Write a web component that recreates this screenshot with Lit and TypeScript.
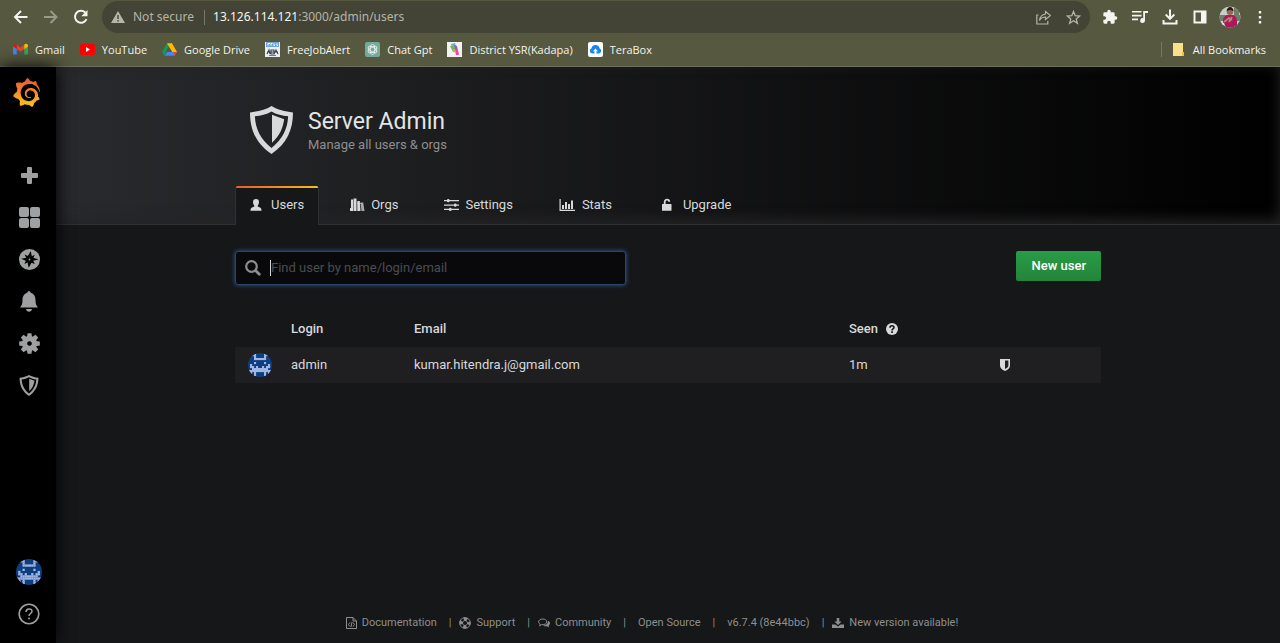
import { LitElement, html, css, svg } from "lit";
import { customElement, state } from "lit/decorators.js";

const GRAFANA =
  "M23.02 10.59a8.578 8.578 0 0 0-.862-3.034 8.911 8.911 0 0 0-1.789-2.445c.337-1.342-.413-2.505-.413-2.505-1.292-.08-2.113.4-2.416.62-.052-.02-.102-.044-.154-.064-.22-.089-.446-.172-.677-.247-.231-.073-.47-.14-.711-.197a9.867 9.867 0 0 0-.875-.161C14.557.753 12.94 0 12.94 0c-1.804 1.145-2.147 2.744-2.147 2.744l-.018.093c-.098.029-.2.057-.298.088-.138.042-.275.094-.413.143-.138.055-.275.107-.41.166a8.869 8.869 0 0 0-1.557.87l-.063-.029c-2.497-.955-4.716.195-4.716.195-.203 2.658.996 4.33 1.235 4.636a11.608 11.608 0 0 0-.607 2.635C1.636 12.684 1 14.9 1 14.9c1.926 2.214 4.171 2.351 4.171 2.351.003-.002.006-.002.006-.005.285.509.615.994.986 1.446.156.19.32.371.488.548-.704 2.009.099 3.68.099 3.68 2.144.08 3.553-.937 3.849-1.173a9.784 9.784 0 0 0 3.164.501h.08l.055-.003.107-.002.103-.005.003.002c1.01 1.44 2.788 1.646 2.788 1.646 1.264-1.332 1.337-2.653 1.337-2.94v-.058c0-.02-.003-.039-.003-.06.265-.187.52-.387.758-.6a7.875 7.875 0 0 0 1.415-1.7c1.43.083 2.437-.885 2.437-.885-.236-1.49-1.085-2.216-1.264-2.354l-.018-.013-.016-.013a.217.217 0 0 1-.031-.02c.008-.092.016-.18.02-.27.011-.162.016-.323.016-.48v-.253l-.005-.098-.008-.135a1.891 1.891 0 0 0-.01-.13c-.003-.042-.008-.083-.013-.125l-.016-.124-.018-.122a6.215 6.215 0 0 0-2.032-3.73 6.015 6.015 0 0 0-3.222-1.46 6.292 6.292 0 0 0-.85-.048l-.107.002h-.063l-.044.003-.104.008a4.777 4.777 0 0 0-3.335 1.695c-.332.4-.592.84-.768 1.297a4.594 4.594 0 0 0-.312 1.817l.003.091c.005.055.007.11.013.164a3.615 3.615 0 0 0 .698 1.82 3.53 3.53 0 0 0 1.827 1.282c.33.098.66.14.971.137.039 0 .078 0 .114-.002l.063-.003c.02 0 .041-.003.062-.003.034-.002.065-.007.099-.01.007 0 .018-.003.028-.003l.031-.005.06-.008a1.18 1.18 0 0 0 .112-.02c.036-.008.072-.013.109-.024a2.634 2.634 0 0 0 .914-.415c.028-.02.056-.041.085-.065a.248.248 0 0 0 .039-.35.244.244 0 0 0-.309-.06l-.078.042c-.09.044-.184.083-.283.116a2.476 2.476 0 0 1-.475.096c-.028.003-.054.006-.083.006l-.083.002c-.026 0-.054 0-.08-.002l-.102-.006h-.012l-.024.006c-.016-.003-.031-.003-.044-.006-.031-.002-.06-.007-.091-.01a2.59 2.59 0 0 1-.724-.213 2.557 2.557 0 0 1-.667-.438 2.52 2.52 0 0 1-.805-1.475 2.306 2.306 0 0 1-.029-.444l.006-.122v-.023l.002-.031c.003-.021.003-.04.005-.06a3.163 3.163 0 0 1 1.352-2.29 3.12 3.12 0 0 1 .937-.43 2.946 2.946 0 0 1 .776-.101h.06l.07.002.045.003h.026l.07.005a4.041 4.041 0 0 1 1.635.49 3.94 3.94 0 0 1 1.602 1.662 3.77 3.77 0 0 1 .397 1.414l.005.076.003.075c.002.026.002.05.002.075 0 .024.003.052 0 .07v.065l-.002.073-.008.174a6.195 6.195 0 0 1-.08.639 5.1 5.1 0 0 1-.267.927 5.31 5.31 0 0 1-.624 1.13 5.052 5.052 0 0 1-3.237 2.014 4.82 4.82 0 0 1-.649.066l-.039.003h-.287a6.607 6.607 0 0 1-1.716-.265 6.776 6.776 0 0 1-3.4-2.274 6.75 6.75 0 0 1-.746-1.15 6.616 6.616 0 0 1-.714-2.596l-.005-.083-.002-.02v-.056l-.003-.073v-.096l-.003-.104v-.07l.003-.163c.008-.22.026-.45.054-.678a8.707 8.707 0 0 1 .28-1.355c.128-.444.286-.872.473-1.277a7.04 7.04 0 0 1 1.456-2.1 5.925 5.925 0 0 1 .953-.763c.169-.111.343-.213.524-.306.089-.05.182-.091.273-.135.047-.02.093-.042.138-.062a7.177 7.177 0 0 1 .714-.267l.145-.045c.049-.015.098-.026.148-.041.098-.029.197-.052.296-.076.049-.013.1-.02.15-.033l.15-.032.151-.028.076-.013.075-.01.153-.024c.057-.01.114-.013.171-.023l.169-.021c.036-.003.073-.008.106-.01l.073-.008.036-.003.042-.002c.057-.003.114-.008.171-.01l.086-.006h.023l.037-.003.145-.007a7.999 7.999 0 0 1 1.708.125 7.917 7.917 0 0 1 2.048.68 8.253 8.253 0 0 1 1.672 1.09l.09.077.089.078c.06.052.114.107.171.159.057.052.112.106.166.16.052.055.107.107.159.164a8.671 8.671 0 0 1 1.41 1.978c.012.026.028.052.04.078l.04.078.075.156c.023.051.05.1.07.153l.065.15a8.848 8.848 0 0 1 .45 1.34.19.19 0 0 0 .201.142.186.186 0 0 0 .172-.184c.01-.246.002-.532-.024-.856z";

/** Wraps SVG content in an <svg> of the given drawn size and viewBox. */
const icon = (w: number, h: number, box: string, body: unknown) =>
  html`<svg width=${w} height=${h} viewBox=${box} fill="currentColor" aria-hidden="true">${body}</svg>`;

const shieldBody = svg`<path fill-rule="evenodd" d="M22 0C16 4 8 5.500 0 6.500C0 24 6 38 22 49C38 38 44 24 44 6.500C36 5.500 28 4 22 0zM22 5.500C27 8.500 33 10 39 10.500C38.500 23 33.500 34 22 43C10.500 34 5.500 23 5 10.500C11 10 17 8.500 22 5.500z"/><path d="M22.500 9L35 13.500C33.500 23 30.500 30 22.500 37.500z"/>`;

/* Left half of the identicon; the right half mirrors it. */
const IDENTICON = ["001100", "000100", "000111", "000000", "000100", "010000", "011010", "001111", "111111", "010100", "000100"];
const identicon = (size: number) =>
  html`<svg class="identicon" width=${size} height=${size} viewBox="0 0 12 12" aria-hidden="true">
    <rect width="12" height="12" fill="#0d3f80" />
    ${IDENTICON.flatMap((row, y) =>
      [...row].flatMap((c, x) =>
        c === "1"
          ? [
              svg`<rect x=${x} y=${y + 0.5} width="1.05" height="1.05" fill="#a3b5e3"/>`,
              svg`<rect x=${11 - x} y=${y + 0.5} width="1.05" height="1.05" fill="#a3b5e3"/>`,
            ]
          : []
      )
    )}
  </svg>`;

const bookmarkIcons = {
  gmail: icon(15, 15, "0 0 24 24", svg`<path fill="#4285f4" d="M1 20h5V10L0 6v13z"/><path fill="#34a853" d="M18 20h5l1-1V6l-6 4z"/><path fill="#ea4335" d="M6 11V4l6 5 6-5v7l-6 4.500z"/><path fill="#c5221f" d="M0 6c0-3 3-4 5-2.500L6 4v7L0 7z"/><path fill="#fbbc04" d="M24 6c0-3-3-4-5-2.500L18 4v7l6-4z"/>`),
  youtube: icon(15, 15, "0 0 15 15", svg`<rect y="2" width="15" height="11" rx="2" fill="#f00"/><path fill="#fff" d="M6 5l4 2.500L6 10z"/>`),
  drive: icon(15, 15, "0 0 24 24", svg`<path fill="#0f9d58" d="M8 2h4l-8 20-4-6z"/><path fill="#ffba00" d="M8 2h8l8 14h-8z"/><path fill="#4285f4" d="M8 16h16l-4 6H4z"/><path fill="#ea4335" d="M19 16h5l-4 6z"/><path fill="#56583f" d="M12 9.500l4 6.500H8.500z"/>`),
  jobs: icon(15, 15, "0 0 15 15", svg`<rect width="15" height="15" fill="#e9eef3"/><rect x="1" y="0" width="13" height="5" fill="#6fa6dc"/><path stroke="#fff" d="M3 3.500V1.500h2M6 3.500v-2h1.500M9 1.500v2h1M12 1.500v2h1" fill="none"/><path stroke="#444b55" stroke-width="1.200" fill="none" d="M2 12l2-4 1 4M6 8h3v4H6zM9 12l2-4 2 4M2 10h11"/><path stroke="#c65b50" d="M4 13.500h7"/>`),
  gpt: icon(15, 15, "0 0 15 15", svg`<rect width="15" height="15" rx="2" fill="#74aa9c"/><g fill="none" stroke="#fff" stroke-width=".7"><ellipse cx="7.500" cy="7.500" rx="2.300" ry="5"/><ellipse cx="7.500" cy="7.500" rx="2.300" ry="5" transform="rotate(60 7.500 7.500)"/><ellipse cx="7.500" cy="7.500" rx="2.300" ry="5" transform="rotate(120 7.500 7.500)"/></g>`),
  district: icon(15, 15, "0 0 15 15", svg`<rect width="15" height="15" fill="#f4f1f2"/><path fill="#59b8d3" d="M4 2l4-1 1 3-4 2z"/><path fill="#73b84a" d="M3 4l4 0 2 5-3 1z"/><path fill="#8b62ae" d="M7 3l3 1 1 5-3-1z"/><path fill="#e34aa0" d="M8 7l3 1 1 5-3 0z"/><path fill="#e7a34a" d="M6 7l2 0 1 4-2-1z"/>`),
  terabox: icon(15, 15, "0 0 15 15", svg`<rect width="15" height="15" rx="2" fill="#fff"/><path fill="#1687f0" d="M4.500 11.500a2.700 2.700 0 0 1-1-5.200 4.100 4.100 0 0 1 8 0 2.700 2.700 0 0 1-1 5.200z"/><path fill="#fff" d="M7.500 6.500l2.500 2.700H8.500v3h-2v-3H5z"/>`),
};

const nav = {
  plus: icon(17, 17, "0 0 17 17", svg`<path d="M6 1q0-1 1-1h3q1 0 1 1v5H16q1 0 1 1v3q0 1-1 1h-5V16q0 1-1 1H7q-1 0-1-1v-5H1q-1 0-1-1V7q0-1 1-1h5z"/>`),
  boards: icon(21, 21, "0 0 21 21", svg`<rect width="10" height="10" rx="2"/><rect x="11" width="10" height="10" rx="2"/><rect y="11" width="10" height="10" rx="2"/><rect x="11" y="11" width="10" height="10" rx="2"/>`),
  explore: icon(21, 21, "0 0 21 21", svg`<circle cx="10.500" cy="10.500" r="10.500"/><path fill="#000" d="M11.800 2l1 5.300 3-1.600-1.400 3 5.100 1.800-5.300 1.300 1.600 3.300-3.300-1.300-2.800 5-1.200-5.400-3.100 1.500 1.400-3.100-4.600-2 5-1.100-1.600-3.100 3.200 1.400z"/><circle cx="10.500" cy="10.500" r=".9"/>`),
  bell: icon(18, 21, "0 0 18 21", svg`<path d="M9 0q1.500 0 1.700 1.700C14.500 2.800 15.500 6 15.500 9c0 4 .8 5.500 2.500 7.500H0C1.700 14.500 2.500 13 2.500 9c0-3 1-6.200 4.800-7.300Q7.500 0 9 0zM6 18h6c-.3 1.800-1.500 2.800-3 2.800S6.300 19.800 6 18z"/>`),
  gear: icon(21, 21, "-12 -12 24 24", svg`${[0, 45, 90, 135, 180, 225, 270, 315].map((a) => svg`<path transform=${`rotate(${a})`} d="M-3-7l.8-4.800h4.400l.8 4.800z"/>`)}<path fill-rule="evenodd" d="M0-8.600a8.600 8.600 0 1 0 .01 0zM0-2.600a2.600 2.600 0 1 1-.01 0z"/>`),
  shield: icon(20, 21, "0 0 44 49", shieldBody),
  help: icon(22, 22, "0 0 22 22", svg`<circle cx="11" cy="11" r="9.800" fill="none" stroke="currentColor" stroke-width="1.600"/><path fill="none" stroke="currentColor" stroke-width="1.500" d="M8 9c0-4 6-4 6-.8 0 2.300-3 2.300-3 4.800"/><circle cx="11" cy="15.500" r="1"/>`),
};

const tabs = [
  { id: "users", label: "Users", icon: icon(15, 14, "0 0 15 14", svg`<path d="M6 1c2 0 3 1.200 3 3.200 0 1.300-.6 2.600-1.300 3.300v1L10 9.500c1.200.5 1.500 1.500 1.500 3.200H.5c0-1.700.3-2.700 1.500-3.200l2.300-1v-1C3.600 6.800 3 5.500 3 4.200 3 2.200 4 1 6 1z"/>`) },
  { id: "orgs", label: "Orgs", icon: icon(15, 14, "0 0 15 14", svg`<path d="M1 1.500h2V13H0V10h1zM3.500 .5h3V13h-3zM7.300 3h2.500l.7 10H7.300z"/><path d="M10.500 4.500h2.700L14.500 13h-3zM7 5h4v1H7z" opacity=".75"/>`) },
  { id: "settings", label: "Settings", icon: icon(15, 14, "0 0 15 14", svg`<path d="M0 2h15v1.300H0zM0 6.400h15v1.300H0zM0 10.800h15v1.300H0z"/><rect x="3" y="1" width="2.500" height="3.300" rx="1"/><rect x="10" y="5.400" width="2.500" height="3.300" rx="1"/><rect x="5" y="9.800" width="2.500" height="3.300" rx="1"/>`) },
  { id: "stats", label: "Stats", icon: icon(17, 14, "0 0 17 14", svg`<path d="M.5 1h1.200v10.800H16V13H.5zM3 7h2v4H3zM6 4h2v7H6zM9 6h2v5H9zM12 2.500h2V11h-2z"/>`) },
  { id: "upgrade", label: "Upgrade", icon: icon(19, 14, "0 0 19 14", svg`<path d="M4.500 6h1.300V4.200C5.800 2 7.100.8 9 .8s3.200 1.200 3.200 3h-1.900c0-.8-.6-1.300-1.300-1.300-.9 0-1.400.7-1.400 1.700V6H13q.5 0 .5.500v5.700q0 .5-.5.500H4.500q-.5 0-.5-.500V6.500q0-.5.500-.500z"/>`) },
];

const footerLinks = [
  { label: "Documentation", icon: icon(11, 12, "0 0 11 12", svg`<path fill="none" stroke="currentColor" d="M.5.5h6.500l3.500 3.500v7.500H.5zM7 .5V4h3.500M4 5.500L2.500 7.500 4 9.500M7 5.500l1.500 2L7 9.500M6 5l-1 5"/>`) },
  { label: "Support", icon: icon(12, 12, "0 0 12 12", svg`<circle cx="6" cy="6" r="3.800" fill="none" stroke="currentColor" stroke-width="3.200" stroke-dasharray="3.300 2.669" stroke-dashoffset="1.650"/><circle cx="6" cy="6" r="5.400" fill="none" stroke="currentColor" stroke-width=".9"/><circle cx="6" cy="6" r="2.500" fill="none" stroke="currentColor" stroke-width=".7"/>`) },
  { label: "Community", icon: icon(12, 12, "0 0 12 12", svg`<path fill="none" stroke="currentColor" d="M4.700 2C2.300 2 .6 3.200.6 4.800c0 1 .7 1.800 1.600 2.300L1.600 8.800l2-1.200c3 .3 5.200-.9 5.200-2.800C8.800 3.200 7 2 4.700 2z"/><path d="M10 3.800c1.300.6 2 1.500 2 2.500s-.6 1.800-1.500 2.400l.8 1.800-2.500-1.200c-1.600.2-3-.1-4-.8 3 0 5.400-1.600 5.200-4.700z"/>`) },
  { label: "Open Source" },
  { label: "v6.7.4 (8e44bbc)" },
  { label: "New version available!", icon: icon(12, 12, "0 0 12 12", svg`<path d="M4.700 1h2.600v3.500H9.500L6 8 2.500 4.500h2.200zM0 7.500h3.500L6 9.500l2.500-2H12V11H0z"/>`) },
];

@customElement("browser-bar")
class BrowserBar extends LitElement {
  static styles = css`
    :host {
      display: block;
      height: 67px;
      box-sizing: border-box;
      background: #56583f;
      border-bottom: 1px solid #6d6f5b;
      font-family: "Open Sans", "Noto Sans", sans-serif;
      color: #f4f4f0;
    }
    svg { display: block; flex: none; }
    button { all: unset; display: flex; cursor: pointer; }
    .toolbar { display: flex; align-items: center; height: 34px; box-sizing: border-box; padding: 0 12px 0 13px; }
    .moves { display: flex; gap: 14px; flex: none; width: 89px; }
    .dim { color: #999a89; }
    .omnibox {
      flex: 1; min-width: 0; display: flex; align-items: center; height: 32px; box-sizing: border-box;
      padding: 0 9px; border-radius: 16px; background: #434435; color: #b5b5a8;
      font-family: "Noto Sans", sans-serif; font-size: 12px;
    }
    .secure { margin-left: 8px; white-space: nowrap; }
    .divider { width: 1px; height: 15px; margin: 0 8px 0 10px; background: #77786a; flex: none; }
    .address {
      flex: 1; min-width: 0; overflow: hidden; white-space: nowrap;
    }
    .host { color: #f4f4f0; }
    .inner { display: flex; gap: 15px; color: #b5b5a8; }
    .actions { display: flex; align-items: center; gap: 14px; margin-left: 12px; flex: none; }
    .profile { margin: 0 -3px; }
    .bookmarks { display: flex; align-items: center; gap: 15px; height: 31px; padding: 0 14px 0 13px; font-size: 11px; }
    a { display: flex; align-items: center; gap: 7px; color: inherit; text-decoration: none; white-space: nowrap; }
    .all { margin-left: auto; padding-left: 10px; border-left: 1px solid #77786a; height: 15px; }
  `;

  private marks = [
    ["gmail", "Gmail"], ["youtube", "YouTube"], ["drive", "Google Drive"], ["jobs", "FreeJobAlert"],
    ["gpt", "Chat Gpt"], ["district", "District YSR(Kadapa)"], ["terabox", "TeraBox"],
  ];

  render() {
    return html`
      <div class="toolbar">
        <div class="moves">
          <button aria-label="Back">${icon(16, 16, "0 0 16 16", svg`<path fill="none" stroke="currentColor" stroke-width="2" d="M14.500 8H2.500M8 2L2 8l6 6"/>`)}</button>
          <button class="dim" aria-label="Forward">${icon(16, 16, "0 0 16 16", svg`<path fill="none" stroke="currentColor" stroke-width="2" d="M1 8h12M7.500 2l6 6-6 6"/>`)}</button>
          <button aria-label="Reload">${icon(16, 16, "0 0 16 16", svg`<path fill="none" stroke="currentColor" stroke-width="2" d="M13.500 10.200A6 6 0 1 1 12.200 3.500"/><path d="M14.500 1v6.200H8.300z"/>`)}</button>
        </div>
        <div class="omnibox">
          ${icon(14, 14, "0 0 14 14", svg`<path fill-rule="evenodd" d="M7 1l7 12H0zM6.300 5v4h1.400V5zM6.300 10v1.400h1.400V10z"/>`)}
          <span class="secure">Not secure</span><span class="divider"></span>
          <span class="address"><span class="host">13.126.114.121</span>:3000/admin/users</span>
          <span class="inner">
            <button aria-label="Share">${icon(15, 15, "0 0 15 15", svg`<path fill="none" stroke="currentColor" stroke-width="1.200" d="M2.500 5H.8v9h11v-3M9.500 1.500l5 4-5 4V7C6 7 4.500 8.500 3.500 10.500 4 6.500 6 4.500 9.500 4z"/>`)}</button>
            <button aria-label="Bookmark">${icon(15, 15, "0 0 15 15", svg`<path fill="none" stroke="currentColor" stroke-width="1.300" d="M7.500 1.500l1.700 4.200 4.500.3-3.500 2.900 1.200 4.400-3.900-2.500-3.900 2.500 1.200-4.400L1.300 6l4.500-.3z"/>`)}</button>
          </span>
        </div>
        <div class="actions">
          <button aria-label="Extensions">${icon(16, 16, "0 0 24 24", svg`<path d="M20.500 11H19V7a2 2 0 0 0-2-2h-4V3.500a2.500 2.500 0 0 0-5 0V5H4a2 2 0 0 0-2 2v3.800h1.500a2.700 2.700 0 0 1 0 5.400H2V20a2 2 0 0 0 2 2h3.800v-1.500a2.700 2.700 0 0 1 5.400 0V22H17a2 2 0 0 0 2-2v-4h1.500a2.500 2.500 0 0 0 0-5z"/>`)}</button>
          <button aria-label="Media">${icon(16, 16, "0 0 16 16", svg`<path d="M0 2h9.500v1.600H0zM0 5.800h9.500v1.600H0zM0 9.600h6v1.600H0zM11.200 2H16v2h-3v7.500a2.400 2.400 0 1 1-1.800-2.300z"/>`)}</button>
          <button aria-label="Downloads">${icon(16, 16, "0 0 16 16", svg`<path d="M7 .5h2v7l2.700-2.700 1.300 1.400-5 5-5-5 1.300-1.400L7 7.500zM.5 11h2v2.500h11V11h2v4.500H.5z"/>`)}</button>
          <button aria-label="Side panel">${icon(16, 16, "0 0 16 16", svg`<path fill-rule="evenodd" d="M1.500 1.500h13v13h-13zM3.500 3.500v9h5.500v-9z"/>`)}</button>
          <button class="profile" aria-label="Profile">${icon(22, 22, "0 0 22 22", svg`<clipPath id="c"><circle cx="11" cy="11" r="10.500"/></clipPath><g clip-path="url(#c)"><rect width="22" height="22" fill="#c6cfc8"/><path fill="#6f7e6b" d="M0 9h22v6H0zM15 2h5v10h-5z"/><path fill="#a81a58" d="M4 22V14c0-3 3-5 6-5h3c4 0 5 4 5 7v6z"/><circle cx="11" cy="5.800" r="3.200" fill="#9a6552"/><path fill="#231c20" d="M7.600 5.500c0-6 7-6 7 0-2-2-5-2-7 0z"/><path stroke="#b98572" stroke-width="1.800" fill="none" d="M5 16l5-4 3 2M13 11l-3 5"/><path fill="#dde3de" d="M0 15l5 2 2 5H0z"/></g>`)}</button>
          <button aria-label="Menu">${icon(16, 16, "0 0 16 16", svg`<path d="M6.800 2h2.400v2.400H6.800zM6.800 7h2.400v2.400H6.800zM6.800 12h2.400v2.400H6.800z"/>`)}</button>
        </div>
      </div>
      <nav class="bookmarks" aria-label="Bookmarks">
        ${this.marks.map(([k, label]) => html`<a href="#">${bookmarkIcons[k as keyof typeof bookmarkIcons]}${label}</a>`)}
        <a class="all" href="#">${icon(14, 15, "0 0 14 15", svg`<path fill="#fbe08a" d="M1 1h10v9h1v4H1z"/><path fill="#e9bd4a" d="M10 10h2v4h-2z"/>`)}All Bookmarks</a>
      </nav>
    `;
  }
}

@customElement("side-menu")
class SideMenu extends LitElement {
  static styles = css`
    :host {
      display: flex; flex-direction: column; flex: none; width: 56px; box-sizing: border-box;
      padding-bottom: 8px; background: #000; box-shadow: 0 0 18px #000; z-index: 1; color: #9fa0a2;
    }
    a { display: flex; align-items: center; justify-content: center; height: 42px; padding-left: 2px; color: inherit; }
    .logo { height: 50px; margin-bottom: 37px; padding: 0 3px 0 0; }
    .push { margin-top: auto; }
    .identicon { border-radius: 50%; }
  `;

  render() {
    return html`
      <a class="logo" href="#" aria-label="Home">
        <svg width="29" height="29" viewBox="0 0 24 24" aria-hidden="true">
          <defs><linearGradient id="g" x1="0" y1="1" x2="0" y2="0"><stop offset="0" stop-color="#fcc915"/><stop offset=".5" stop-color="#f58b2d"/><stop offset="1" stop-color="#ed5134"/></linearGradient></defs>
          <path fill="url(#g)" d=${GRAFANA} />
        </svg>
      </a>
      <a href="#" aria-label="Create">${nav.plus}</a>
      <a href="#" aria-label="Dashboards">${nav.boards}</a>
      <a href="#" aria-label="Explore">${nav.explore}</a>
      <a href="#" aria-label="Alerting">${nav.bell}</a>
      <a href="#" aria-label="Configuration">${nav.gear}</a>
      <a href="#" aria-label="Server Admin">${nav.shield}</a>
      <a class="push" href="#" aria-label="Profile">${identicon(26)}</a>
      <a href="#" aria-label="Help">${nav.help}</a>
    `;
  }
}

@customElement("app-root")
class AppRoot extends LitElement {
  static styles = css`
    :host {
      display: flex; flex-direction: column; min-height: 100vh; background: #161719; color: #d8d9da;
      font-family: Roboto, "Liberation Sans", sans-serif; font-size: 13px; line-height: 20px;
    }
    svg { display: block; flex: none; }
    a { color: inherit; text-decoration: none; }
    .body { flex: 1; display: flex; }
    main { flex: 1; min-width: 0; display: flex; flex-direction: column; }
    .container { width: 100%; max-width: 866px; margin: 0 auto; }
    .head {
      background: linear-gradient(90deg, #292a2d, #000);
      box-shadow: inset 0 -4px 14px #242426; border-bottom: 1px solid #303133;
    }
    .intro { display: flex; align-items: center; gap: 15px; padding: 39px 15px 32px; }
    .titles { padding-top: 2px; }
    h1 { margin: 0; font-size: 23px; line-height: 28px; font-weight: 400; color: #e3e4e5; }
    .sub { margin: 0; font-size: 13px; line-height: 18px; color: #8e8e8e; }
    .tabs { display: flex; gap: 16px; }
    .tab {
      display: flex; align-items: center; gap: 6px; height: 38px; box-sizing: border-box;
      padding: 0 15px; white-space: nowrap;
    }
    .tab.active {
      height: 39px; margin-bottom: -1px; padding: 0 14px 1px; border: 1px solid #303133; border-width: 0 1px;
      background: linear-gradient(90deg, #eb5b2c, #f7bd1c) top / 100% 2px no-repeat #161719; border-radius: 2px 2px 0 0;
    }
    .bar { display: flex; align-items: flex-start; justify-content: space-between; gap: 16px; margin: 26px auto 0; }
    .search {
      flex: 0 1 391px; display: flex; align-items: center; gap: 9px; height: 34px; box-sizing: border-box;
      padding: 0 9px; background: #09090b; border: 1px solid #2c4468; border-radius: 3px;
      box-shadow: 0 0 4px #2f5da0; color: #8e8e8e;
    }
    .caret { flex: none; width: 1px; height: 16px; margin-right: -9px; background: #d8d9da; }
    .search input {
      flex: 1; min-width: 0; padding: 0; border: 0; outline: 0; background: none; color: #d8d9da; font: inherit;
    }
    .search input::placeholder { color: #4b4c50; opacity: 1; }
    .new {
      height: 30px; padding: 0 15px 1px; border: 0; border-radius: 2px; color: #fff;
      background: linear-gradient(#299c46, #23843b); font: 500 13px/28px Roboto, sans-serif; cursor: pointer;
    }
    table { width: 100%; margin-top: 25px; border-collapse: collapse; table-layout: fixed; }
    th, td { height: 36px; padding: 0 10px; text-align: left; }
    th { height: 37px; font-weight: 500; }
    tbody tr { background: #1f1f21; }
    .c-pic { width: 46px; } .c-login { width: 123px; } .c-seen { width: 151px; } .c-admin { width: 111px; }
    .pic { padding: 0 13px; }
    .identicon { border-radius: 50%; }
    .seen { display: flex; align-items: center; gap: 8px; }
    footer {
      display: flex; flex-wrap: wrap; justify-content: center; margin-top: auto; padding: 10px 32px 10px 0;
      color: #8e8e8e; font-size: 11px;
    }
    .item { display: flex; align-items: center; }
    .item a { display: flex; align-items: center; gap: 5px; }
    .item + .item::before { content: "|"; margin: 0 8px 0 12px; }
    .plain a { margin-left: 4px; }
  `;

  @state() private active = "users";

  render() {
    return html`
      <browser-bar></browser-bar>
      <div class="body">
        <side-menu></side-menu>
        <main>
          <header class="head">
            <div class="container">
              <div class="intro">
                ${icon(43, 48, "0 0 44 49", shieldBody)}
                <div class="titles"><h1>Server Admin</h1><p class="sub">Manage all users &amp; orgs</p></div>
              </div>
              <nav class="tabs">
                ${tabs.map(
                  (t) => html`<a class="tab ${t.id === this.active ? "active" : ""}" href="#${t.id}" @click=${() => (this.active = t.id)}>${t.icon}${t.label}</a>`
                )}
              </nav>
            </div>
          </header>
          <div class="container bar">
            <label class="search">
              ${icon(16, 16, "0 0 16 16", svg`<circle cx="6.500" cy="6.500" r="5.300" fill="none" stroke="currentColor" stroke-width="2.200"/><path stroke="currentColor" stroke-width="2.800" stroke-linecap="round" d="M10.800 10.800l3.500 3.500"/>`)}
              <span class="caret"></span>
              <input type="text" aria-label="Find user" placeholder="Find user by name/login/email" />
            </label>
            <button class="new">New user</button>
          </div>
          <div class="container">
            <table>
              <colgroup><col class="c-pic" /><col class="c-login" /><col /><col class="c-seen" /><col class="c-admin" /></colgroup>
              <thead>
                <tr>
                  <th></th><th>Login</th><th>Email</th>
                  <th><span class="seen">Seen ${icon(12, 12, "0 0 12 12", svg`<circle cx="6" cy="6" r="6"/><path fill="none" stroke="#161719" stroke-width="1.600" d="M4 4.800c0-2.600 4-2.600 4-.4C8 5.800 6 5.800 6 7.500"/><path fill="#161719" d="M5.200 8.300h1.700V10H5.200z"/>`)}</span></th>
                  <th></th>
                </tr>
              </thead>
              <tbody>
                <tr>
                  <td class="pic">${identicon(24)}</td>
                  <td>admin</td>
                  <td>kumar.hitendra.j@gmail.com</td>
                  <td>1m</td>
                  <td>${icon(10, 12, "0 0 10 12", svg`<path fill-rule="evenodd" d="M0 0h10v6.500C10 9 8 11 5 12 2 11 0 9 0 6.500zM5 1.600v8.500c2-.8 3.400-2 3.400-3.800V1.600z"/>`)}</td>
                </tr>
              </tbody>
            </table>
          </div>
          <footer>
            ${footerLinks.map((l) => html`<span class="item ${l.icon ? "" : "plain"}"><a href="#">${l.icon ?? ""}${l.label}</a></span>`)}
          </footer>
        </main>
      </div>
    `;
  }
}
